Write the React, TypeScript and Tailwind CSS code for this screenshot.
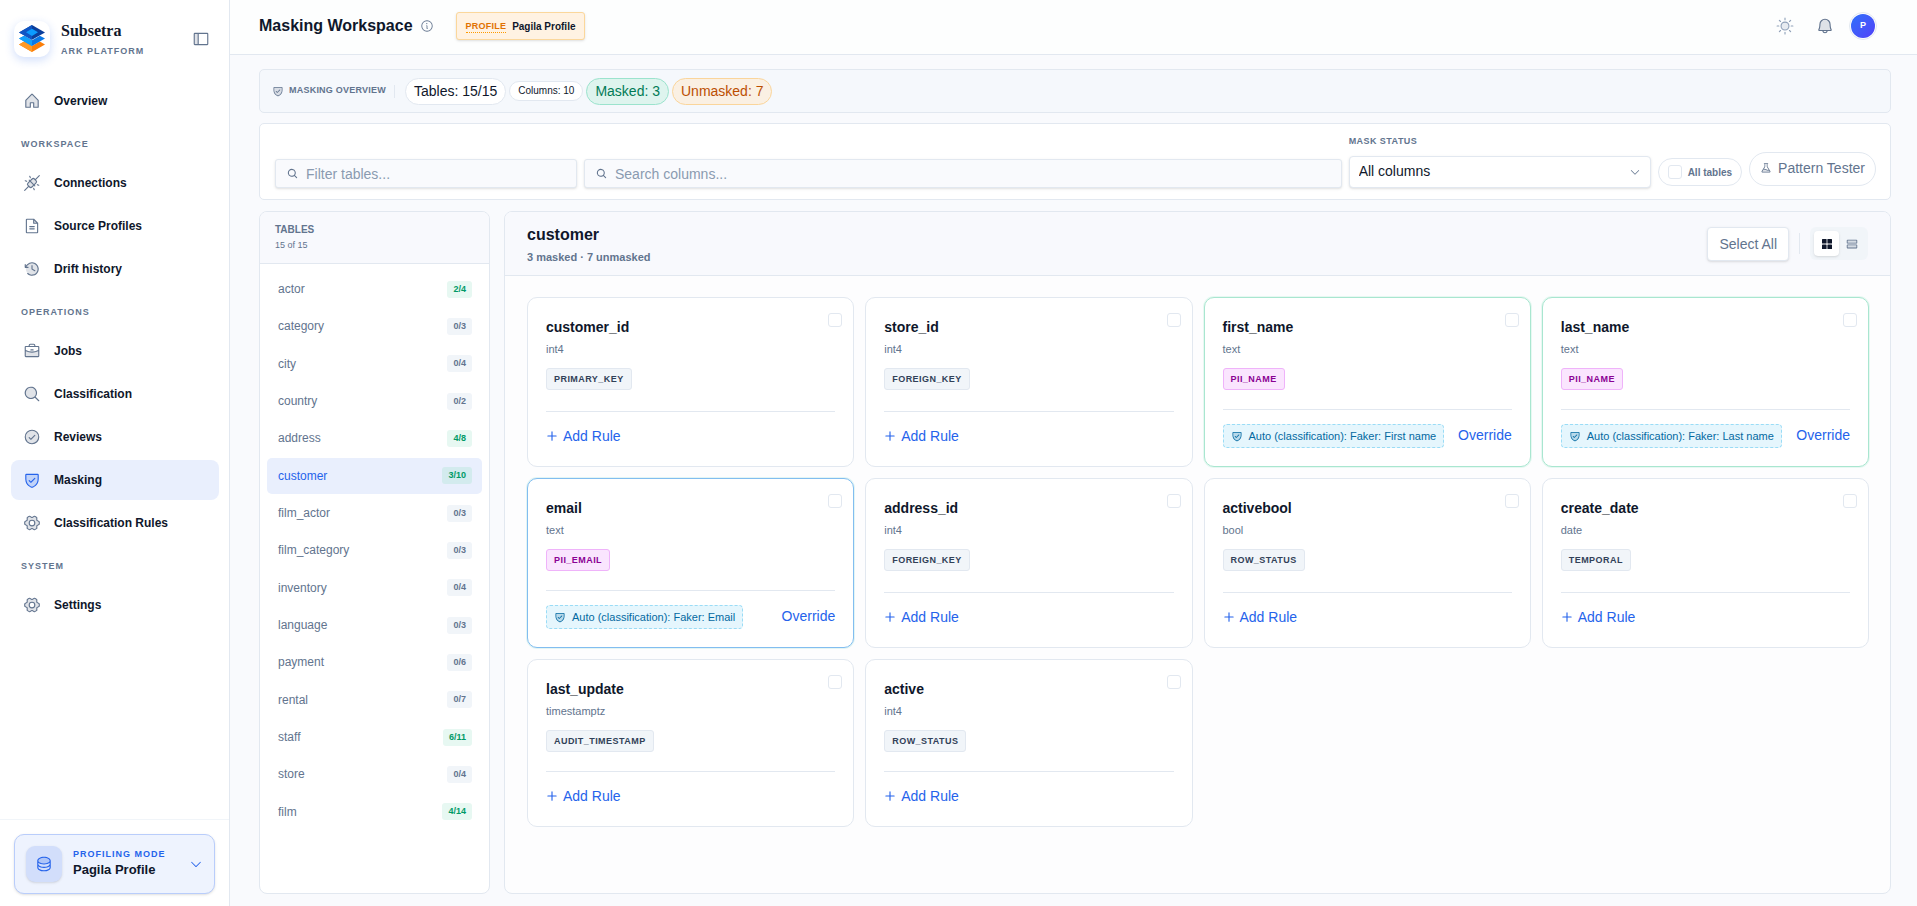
import { useState } from "react";
import type { ReactNode } from "react";
import type { IconType } from "react-icons";
import clsx from "clsx";
import {
  PiBellDuotone,
  PiBriefcaseDuotone,
  PiCaretDown,
  PiCheckCircleDuotone,
  PiClockCounterClockwiseDuotone,
  PiDatabaseDuotone,
  PiFileTextDuotone,
  PiFlaskDuotone,
  PiGearSixDuotone,
  PiHouseDuotone,
  PiInfo,
  PiMagnifyingGlassBold,
  PiMagnifyingGlassDuotone,
  PiPlugsConnectedDuotone,
  PiPlusBold,
  PiRowsDuotone,
  PiShieldCheckDuotone,
  PiSidebarSimpleDuotone,
  PiSunDuotone,
} from "react-icons/pi";

type NavItem = { label: string; icon: IconType };
type NavGroup = { title?: string; items: NavItem[] };

const NAV: NavGroup[] = [
  { items: [{ label: "Overview", icon: PiHouseDuotone }] },
  {
    title: "Workspace",
    items: [
      { label: "Connections", icon: PiPlugsConnectedDuotone },
      { label: "Source Profiles", icon: PiFileTextDuotone },
      { label: "Drift history", icon: PiClockCounterClockwiseDuotone },
    ],
  },
  {
    title: "Operations",
    items: [
      { label: "Jobs", icon: PiBriefcaseDuotone },
      { label: "Classification", icon: PiMagnifyingGlassDuotone },
      { label: "Reviews", icon: PiCheckCircleDuotone },
      { label: "Masking", icon: PiShieldCheckDuotone },
      { label: "Classification Rules", icon: PiGearSixDuotone },
    ],
  },
  { title: "System", items: [{ label: "Settings", icon: PiGearSixDuotone }] },
];

const TABLES = [
  { name: "actor", masked: 2, total: 4 },
  { name: "category", masked: 0, total: 3 },
  { name: "city", masked: 0, total: 4 },
  { name: "country", masked: 0, total: 2 },
  { name: "address", masked: 4, total: 8 },
  { name: "customer", masked: 3, total: 10 },
  { name: "film_actor", masked: 0, total: 3 },
  { name: "film_category", masked: 0, total: 3 },
  { name: "inventory", masked: 0, total: 4 },
  { name: "language", masked: 0, total: 3 },
  { name: "payment", masked: 0, total: 6 },
  { name: "rental", masked: 0, total: 7 },
  { name: "staff", masked: 6, total: 11 },
  { name: "store", masked: 0, total: 4 },
  { name: "film", masked: 4, total: 14 },
];

type Column = {
  name: string;
  type: string;
  tag: string;
  rule?: string;
  tone?: "masked" | "focused";
};

const COLUMNS: Column[] = [
  { name: "customer_id", type: "int4", tag: "PRIMARY_KEY" },
  { name: "store_id", type: "int4", tag: "FOREIGN_KEY" },
  { name: "first_name", type: "text", tag: "PII_NAME", rule: "First name", tone: "masked" },
  { name: "last_name", type: "text", tag: "PII_NAME", rule: "Last name", tone: "masked" },
  { name: "email", type: "text", tag: "PII_EMAIL", rule: "Email", tone: "focused" },
  { name: "address_id", type: "int4", tag: "FOREIGN_KEY" },
  { name: "activebool", type: "bool", tag: "ROW_STATUS" },
  { name: "create_date", type: "date", tag: "TEMPORAL" },
  { name: "last_update", type: "timestamptz", tag: "AUDIT_TIMESTAMP" },
  { name: "active", type: "int4", tag: "ROW_STATUS" },
];

// Three stacked layers: dark blue diamond, light blue and orange chevrons.
function Logo() {
  return (
    <svg viewBox="0 0 28 28" className="size-7" aria-hidden>
      <path d="M1 19.4 6.2 16.6 14 21l7.8-4.4 5.2 2.8L14 27Z" fill="#fb7f0a" />
      <path d="M1 19.4 6.2 16.6 14 21v6Z" fill="#ff9a26" />
      <path d="M1 13.6 6.2 10.8 14 15.2l7.8-4.4 5.2 2.8L14 21Z" fill="#0a78e6" />
      <path d="M1 13.6 6.2 10.8 14 15.2V21Z" fill="#12a0fb" />
      <path d="M14 0 27 7.4 14 14.8 1 7.4Z" fill="#0b3f9c" />
      <path d="M1 7.4 14 14.8V0Z" fill="#0f55c4" />
      <path d="m14 3.8 6 3.5-6 3.6-6-3.6Z" fill="#0c9bff" />
    </svg>
  );
}

function Sidebar() {
  const [active, setActive] = useState("Masking");

  return (
    <aside className="flex w-[230px] shrink-0 flex-col border-r border-slate-200 bg-white">
      <div className="flex items-center pt-[19px] pr-[19px] pl-3.5">
        <span className="flex size-9 items-center justify-center rounded-[10px] bg-white shadow-[0_3px_10px_rgba(37,99,235,0.22)]">
          <Logo />
        </span>
        <div className="ml-[11px] flex-1">
          <div className="font-['Liberation_Serif',serif] text-base leading-6 font-bold text-slate-900">
            Subsetra
          </div>
          <div className="text-[9px] leading-4 font-bold tracking-[1px] text-slate-500">
            ARK PLATFORM
          </div>
        </div>
        <button type="button" aria-label="Collapse sidebar" className="text-slate-500">
          <PiSidebarSimpleDuotone className="size-[18px]" />
        </button>
      </div>

      <nav className="mt-[22px] flex-1 pr-2.5 pl-[11px]">
        {NAV.map((group) => (
          <div key={group.title ?? "root"}>
            {group.title && (
              <h2 className="pt-[15px] pb-[11px] pl-2.5 text-[9px] leading-4 font-bold tracking-[1px] text-slate-500 uppercase">
                {group.title}
              </h2>
            )}
            <ul className="flex flex-col gap-[3px]">
              {group.items.map(({ label, icon: Icon }) => (
                <li key={label}>
                  <a
                    href="#"
                    onClick={() => setActive(label)}
                    aria-current={active === label ? "page" : undefined}
                    className={clsx(
                      "flex h-10 items-center gap-[13px] rounded-lg pl-3 text-xs font-bold text-slate-900",
                      active === label && "bg-[#e9effd]",
                    )}
                  >
                    <Icon
                      className={clsx(
                        "size-[18px]",
                        active === label ? "text-[#2563eb]" : "text-slate-500",
                      )}
                    />
                    {label}
                  </a>
                </li>
              ))}
            </ul>
          </div>
        ))}
      </nav>

      <div className="border-t border-slate-100 px-3.5 pt-3.5 pb-3">
        <button
          type="button"
          className="flex w-full items-center rounded-[10px] border border-[#b9cdfb] bg-[#eef3fe] px-[11px] py-[11px] text-left shadow-sm"
        >
          <span className="flex size-9 items-center justify-center rounded-[9px] bg-[#d2defb] text-[#2563eb] shadow-sm">
            <PiDatabaseDuotone className="size-[18px]" />
          </span>
          <span className="ml-[11px] flex-1">
            <span className="block text-[9px] leading-3 font-bold tracking-[1px] text-[#2563eb]">
              PROFILING MODE
            </span>
            <span className="block text-[13px] leading-5 font-bold text-slate-900">
              Pagila Profile
            </span>
          </span>
          <PiCaretDown className="size-3.5 text-[#2563eb]" />
        </button>
      </div>
    </aside>
  );
}

function Header() {
  return (
    <header className="flex h-[55px] shrink-0 items-center border-b border-slate-200 bg-[#fdfefe] pr-10 pb-0.5 pl-[29px]">
      <h1 className="text-base leading-5 font-bold text-slate-900">Masking Workspace</h1>
      <button type="button" aria-label="About masking" className="ml-[7px] text-slate-500">
        <PiInfo className="size-3.5" />
      </button>
      <div className="ml-[22px] flex h-7 items-center gap-1.5 rounded-[3px] border border-[#fbd79b] bg-[#fff2e2] px-[9px] text-[10px] font-bold shadow-sm">
        <span className="border-b border-dotted border-amber-500 text-[9px] leading-3 tracking-wide text-amber-600">
          PROFILE
        </span>
        <span className="text-slate-900">Pagila Profile</span>
      </div>
      <div className="ml-auto flex items-center">
        <button type="button" aria-label="Toggle theme" className="text-slate-400">
          <PiSunDuotone className="size-[18px]" />
        </button>
        <button type="button" aria-label="Notifications" className="ml-[22px] text-slate-500">
          <PiBellDuotone className="size-[18px]" />
        </button>
        <button
          type="button"
          aria-label="Account"
          className="ml-[15px] flex size-7 items-center justify-center rounded-full border border-slate-200 bg-white"
        >
          <span className="flex size-6 items-center justify-center rounded-full bg-linear-to-br from-[#2b70fb] to-[#4f3ff8] text-[9px] font-bold text-white">
            P
          </span>
        </button>
      </div>
    </header>
  );
}

function OverviewBar() {
  return (
    <section className="flex h-11 shrink-0 items-center rounded-[5px] border border-slate-200 bg-[#f5f8fc] px-3 text-slate-900">
      <PiShieldCheckDuotone className="size-3 text-slate-500" />
      <h2 className="ml-[5px] text-[9px] font-bold tracking-wide text-slate-500">MASKING OVERVIEW</h2>
      <span className="mr-2.5 ml-2 h-[13px] w-px bg-slate-200" />
      <div className="flex items-center gap-[3px]">
        <span className="rounded-full border border-slate-200 bg-white px-2 text-sm leading-[25px]">
          Tables: 15/15
        </span>
        <span className="rounded-full border border-slate-200 bg-white px-2 text-[10px] leading-[18px]">
          Columns: 10
        </span>
        <span className="rounded-full border border-[#9be3cd] bg-[#def4ee] px-2 text-sm leading-[25px] text-emerald-700">
          Masked: 3
        </span>
        <span className="rounded-full border border-[#fad59b] bg-[#faf0e3] px-2 text-sm leading-[25px] text-amber-700">
          Unmasked: 7
        </span>
      </div>
    </section>
  );
}

function SearchField({ label, className }: { label: string; className: string }) {
  return (
    <label
      className={clsx(
        "flex h-[29px] items-center gap-2 rounded-[3px] border border-slate-200 bg-[#f9fafd] px-[11px] shadow-sm",
        className,
      )}
    >
      <PiMagnifyingGlassBold className="size-[11px] shrink-0 text-slate-500" />
      <input
        type="text"
        placeholder={label}
        aria-label={label}
        className="min-w-0 flex-1 bg-transparent text-sm text-slate-900 outline-none placeholder:text-[#8a9ab0]"
      />
    </label>
  );
}

function CheckBox({ label }: { label: string }) {
  return (
    <input
      type="checkbox"
      aria-label={label}
      className="size-3.5 shrink-0 appearance-none rounded-[3px] border border-slate-200 bg-white checked:bg-[#2563eb]"
    />
  );
}

function FilterBar() {
  return (
    <section className="mt-2.5 flex shrink-0 items-end gap-[7px] rounded-[5px] border border-slate-200 bg-white pt-[11px] pr-3.5 pb-[11px] pl-[15px]">
      <SearchField label="Filter tables..." className="w-[302px]" />
      <SearchField label="Search columns..." className="flex-1" />
      <div className="w-[302px]">
        <label htmlFor="mask-status" className="block text-[9px] leading-3 font-bold tracking-wider text-slate-500">
          MASK STATUS
        </label>
        <div className="relative mt-[9px]">
          <select
            id="mask-status"
            className="h-8 w-full appearance-none rounded-[4px] border border-slate-200 bg-white pr-8 pb-0.5 pl-[9px] text-sm text-slate-900 shadow-sm"
          >
            <option>All columns</option>
            <option>Masked</option>
            <option>Unmasked</option>
          </select>
          <PiCaretDown className="pointer-events-none absolute top-2.5 right-2.5 size-3 text-slate-500" />
        </div>
      </div>
      <div className="flex items-end gap-[7px] pb-0.5">
        <label className="flex h-7 items-center gap-1.5 rounded-full border border-slate-200 bg-white px-[9px] text-[10px] font-bold text-slate-500">
          <CheckBox label="All tables" />
          All tables
        </label>
        <button
          type="button"
          className="flex h-[34px] items-center gap-1.5 rounded-full border border-slate-200 bg-white px-2.5 pb-0.5 text-sm text-slate-500"
        >
          <PiFlaskDuotone className="size-3" />
          Pattern Tester
        </button>
      </div>
    </section>
  );
}

function TableList() {
  const [selected, setSelected] = useState("customer");

  return (
    <section className="flex w-[231px] shrink-0 flex-col overflow-hidden rounded-lg border border-slate-200 bg-white">
      <div className="border-b border-slate-200 bg-[#f8f9fd] px-[15px] py-2.5">
        <h2 className="text-[10px] leading-4 font-bold text-slate-500">TABLES</h2>
        <p className="text-[9px] leading-[15px] text-slate-500">15 of 15</p>
      </div>
      <ul className="flex flex-1 flex-col justify-between px-[7px] pt-[7px] pb-[63px]">
        {TABLES.map(({ name, masked, total }) => {
          const isSelected = name === selected;
          return (
            <li key={name}>
              <button
                type="button"
                onClick={() => setSelected(name)}
                className={clsx(
                  "flex h-9 w-full items-center justify-between rounded-[5px] pr-2.5 pl-[11px] text-xs",
                  isSelected ? "bg-[#e9effd] text-[#2563eb]" : "text-slate-500",
                )}
              >
                {name}
                <span
                  className={clsx(
                    "rounded-[3px] px-1.5 text-[9px] leading-[17px] font-bold",
                    isSelected
                      ? "bg-[#d3ebee] text-emerald-600"
                      : masked > 0
                        ? "bg-[#e7f8f2] text-emerald-600"
                        : "bg-slate-100 text-slate-500",
                  )}
                >
                  {masked}/{total}
                </span>
              </button>
            </li>
          );
        })}
      </ul>
    </section>
  );
}

function ColumnCard({ column }: { column: Column }) {
  const isPii = column.tag.startsWith("PII");

  return (
    <article
      className={clsx(
        "flex flex-col rounded-[10px] border bg-white p-[18px]",
        column.tone === "masked" && "border-[#a9e6d0] shadow-[0_0_0_1px_#e7f8f2]",
        column.tone === "focused" && "border-[#82bdf0] shadow-[0_0_0_1px_#e3f5f4]",
        !column.tone && "border-slate-200",
      )}
    >
      <div className="flex items-start justify-between">
        <h3 className="mt-px text-sm leading-5 font-bold text-slate-900">{column.name}</h3>
        <div className="-mt-[3px] -mr-[7px] flex">
          <CheckBox label={`Select ${column.name}`} />
        </div>
      </div>
      <p className="mt-1 text-[11px] leading-4 text-slate-500">{column.type}</p>
      <div className="mt-[11px] mb-[19px] flex">
        <span
          className={clsx(
            "rounded-[3px] border px-[7px] text-[9px] leading-5 font-bold tracking-wider",
            isPii
              ? "border-[#efb3fa] bg-[#fae5fe] text-fuchsia-800"
              : "border-slate-200 bg-slate-100 text-slate-700",
          )}
        >
          {column.tag}
        </span>
      </div>
      {column.rule ? (
        <CardFooter className="pt-3.5">
          <span className="flex h-6 items-center gap-1.5 rounded-[4px] border border-dashed border-[#9adcf6] bg-[#e5f6fd] px-[7px] text-[11px] whitespace-nowrap text-[#0369a1]">
            <PiShieldCheckDuotone className="size-3" />
            Auto (classification): Faker: {column.rule}
          </span>
          <button type="button" className="pb-0.5 text-sm text-[#2563eb]">
            Override
          </button>
        </CardFooter>
      ) : (
        <CardFooter className="pt-3">
          <button type="button" className="flex h-6 items-center gap-[5px] text-sm text-[#2563eb]">
            <PiPlusBold className="size-3" />
            Add Rule
          </button>
        </CardFooter>
      )}
    </article>
  );
}

function CardFooter({ className, children }: { className: string; children: ReactNode }) {
  return (
    <div className={clsx("mt-auto flex items-center justify-between border-t border-slate-200", className)}>
      {children}
    </div>
  );
}

function ColumnPanel() {
  return (
    <section className="flex min-w-0 flex-1 flex-col overflow-hidden rounded-lg border border-slate-200 bg-[#fdfdfe]">
      <div className="flex h-16 items-center border-b border-slate-200 bg-[#f8f9fd] px-[22px]">
        <div className="pt-0.5">
          <h2 className="text-base leading-5 font-bold text-slate-900">customer</h2>
          <p className="mt-1 text-[11px] leading-4 font-bold text-slate-500">3 masked · 7 unmasked</p>
        </div>
        <button
          type="button"
          className="ml-auto h-[34px] rounded-[4px] border border-slate-200 bg-white px-[11px] text-sm text-slate-500 shadow-sm"
        >
          Select All
        </button>
        <span className="mx-2.5 h-[21px] w-px bg-slate-200" />
        <div className="flex rounded-md bg-slate-100 p-1">
          <button
            type="button"
            aria-label="Grid view"
            className="flex size-[25px] items-center justify-center rounded-[4px] bg-white text-slate-900 shadow-sm"
          >
            <svg viewBox="0 0 14 14" className="size-3.5" fill="currentColor" aria-hidden>
              <rect x="2" y="2" width="4.6" height="4.6" rx="0.6" />
              <rect x="7.4" y="2" width="4.6" height="4.6" rx="0.6" />
              <rect x="2" y="7.4" width="4.6" height="4.6" rx="0.6" />
              <rect x="7.4" y="7.4" width="4.6" height="4.6" rx="0.6" />
            </svg>
          </button>
          <button
            type="button"
            aria-label="List view"
            className="flex size-[25px] items-center justify-center text-slate-500"
          >
            <PiRowsDuotone className="size-3.5" />
          </button>
        </div>
      </div>
      <div className="grid grid-cols-4 gap-[11px] pt-[21px] pr-[21px] pl-[22px]">
        {COLUMNS.map((column) => (
          <ColumnCard key={column.name} column={column} />
        ))}
      </div>
    </section>
  );
}

export default function App() {
  return (
    <div className="flex h-screen bg-[#f9fafd] font-['Liberation_Sans',Arial,sans-serif]">
      <Sidebar />
      <div className="flex min-w-0 flex-1 flex-col">
        <Header />
        <main className="flex min-h-0 flex-1 flex-col pt-3.5 pr-[26px] pb-3 pl-[29px]">
          <OverviewBar />
          <FilterBar />
          <div className="mt-[11px] flex min-h-0 flex-1 gap-3.5">
            <TableList />
            <ColumnPanel />
          </div>
        </main>
      </div>
    </div>
  );
}
